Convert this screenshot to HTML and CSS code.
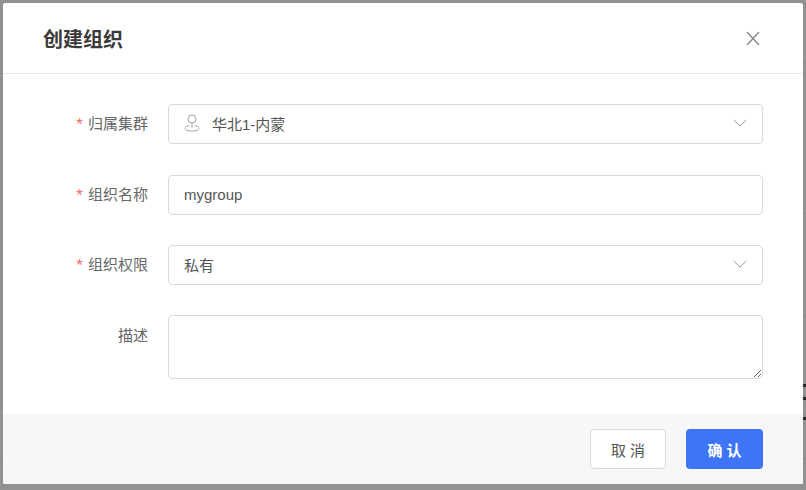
FILE: index.html
```html
<!DOCTYPE html>
<html lang="zh-CN">
<head>
<meta charset="utf-8">
<title>创建组织</title>
<link rel="stylesheet" href="styles.css">
</head>
<body>
<div class="backdrop">
  <i class="bg-line l1"></i><i class="bg-line l2"></i><i class="bg-line l3"></i><i class="bg-line l4"></i>
  <i class="bg-dash d1"></i><i class="bg-dash d2"></i><i class="bg-dash d3"></i>
</div>
<div class="dialog">
  <header class="head">
    <h1 class="title">创建组织</h1>
    <svg class="close" width="14" height="15" viewBox="0 0 14 15"><path d="M1 1l12 13M13 1L1 14" stroke="#8c8c8c" stroke-width="1.500" fill="none"/></svg>
  </header>
  <form class="form">
    <div class="row first">
      <label class="label"><span class="req">*</span>归属集群</label>
      <div class="field select">
        <svg class="pin" width="16" height="18" viewBox="0 0 16 18"><g fill="none" stroke="#a3a3a3" stroke-width="1"><circle cx="8" cy="5" r="4"/><path d="M8 9v5"/><path d="M5.600 11.600C3 12 1 13 1 14.400 1 16 4 17 8 17s7-1 7-2.600C15 13 13 12 10.400 11.600"/></g></svg>
        <span>华北1-内蒙</span>
        <svg class="caret" width="14" height="8" viewBox="0 0 14 8"><path d="M.5.800L7 7l6.500-6.200" fill="none" stroke="#999" stroke-width="1"/></svg>
      </div>
    </div>
    <div class="row">
      <label class="label"><span class="req">*</span>组织名称</label>
      <div class="field"><span>mygroup</span></div>
    </div>
    <div class="row">
      <label class="label"><span class="req">*</span>组织权限</label>
      <div class="field select">
        <span>私有</span>
        <svg class="caret" width="14" height="8" viewBox="0 0 14 8"><path d="M.5.800L7 7l6.500-6.200" fill="none" stroke="#999" stroke-width="1"/></svg>
      </div>
    </div>
    <div class="row last">
      <label class="label">描述</label>
      <textarea class="area"></textarea>
    </div>
  </form>
  <footer class="foot">
    <button class="btn cancel" type="button">取 消</button>
    <button class="btn ok" type="button">确 认</button>
  </footer>
</div>
</body>
</html>
```
FILE: styles.css
```css
* { box-sizing: border-box; }
html, body { margin: 0; height: 100%; }
body {
  background: #919191;
  font-family: "Liberation Sans", "Noto Sans CJK SC", sans-serif;
  font-size: 15px;
  color: #555;
  padding: 3px;
  overflow: hidden;
}
.backdrop { position: absolute; inset: 0; }
.bg-line { position: absolute; left: 0; right: 0; height: 1px; background: #858585; }
.l1 { top: 62px; }
.l2 { top: 213px; }
.l3 { top: 316px; }
.l4 { top: 458px; }
.bg-dash { position: absolute; left: 803px; width: 3px; height: 3px; background: #2a2a2a; }
.d1 { top: 384px; }
.d2 { top: 397px; }
.d3 { top: 417px; }
.dialog {
  position: relative;
  width: 800px;
  height: 481px;
  background: #fff;
  border-radius: 2px;
  display: flex;
  flex-direction: column;
  overflow: hidden;
}
.head {
  height: 71px;
  flex: none;
  border-bottom: 1px solid #e4e6ec;
  padding: 3px 43px 0 40px;
  display: flex;
  align-items: center;
  justify-content: space-between;
}
.title { margin: 0; font-size: 20px; font-weight: 700; color: #3a3a3a; line-height: 28px; }
.close { display: block; margin-top: -3px; }
.form { flex: 1; padding: 30px 40px 0 0; display: flex; flex-direction: column; gap: 30px; }
.row { display: flex; gap: 20px; }
.row.first { margin-bottom: 1px; }
.label {
  width: 145px;
  flex: none;
  text-align: right;
  height: 40px;
  line-height: 40px;
  color: #666;
}
.row.last .label { line-height: 42px; }
.req { color: #f56c6c; margin-right: 5px; font-size: 17px; font-family: "Liberation Sans", sans-serif; line-height: 1; position: relative; top: 1px; }
.field {
  flex: 1;
  height: 40px;
  border: 1px solid #d9d9d9;
  border-radius: 4px;
  padding: 0 15px 2px;
  display: flex;
  align-items: center;
  color: #555;
}
.pin { margin-right: 12px; flex: none; }
.select .caret { margin-left: auto; }
.area {
  flex: 1;
  display: block;
  height: 64px;
  border: 1px solid #d9d9d9;
  border-radius: 4px;
  background: #fff;
  margin: 0;
}
.foot {
  flex: none;
  height: 70px;
  background: #f6f7f9;
  padding: 0 40px 0 0;
  display: flex;
  justify-content: flex-end;
  align-items: center;
  gap: 20px;
}
.btn {
  height: 40px;
  border-radius: 4px;
  font: inherit;
  padding: 0;
}
.cancel { width: 76px; background: #fff; border: 1px solid #d9d9d9; color: #555; }
.ok { width: 77px; background: #3e74f6; border: 0; color: #fff; font-weight: 700; }
```
